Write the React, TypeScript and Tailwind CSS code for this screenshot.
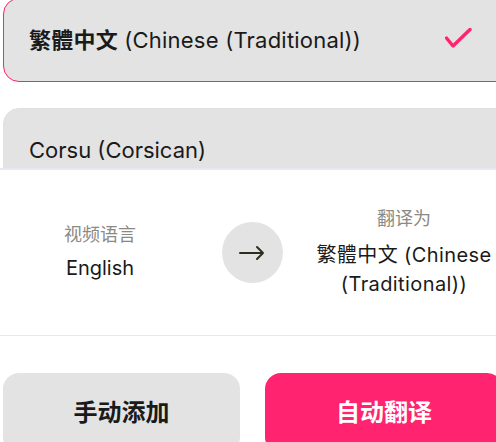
const font = "font-['Inter','Noto_Sans_CJK_SC',sans-serif]";

function Check() {
  return (
    <svg width="28" height="22" viewBox="0 0 28 22" fill="none" className="mb-[4px] shrink-0">
      <path d="M1.5 11L8 19L25 2.5" stroke="#ff2470" strokeWidth="3.4" strokeLinecap="round" strokeLinejoin="round" />
    </svg>
  );
}

function Arrow() {
  return (
    <svg width="26" height="16" viewBox="0 0 26 16" fill="none">
      <path d="M1 8H24M18 2L24 8L18 14" stroke="#2e2e1e" strokeWidth="2" strokeLinecap="round" strokeLinejoin="round" />
    </svg>
  );
}

export default function App() {
  return (
    <div className={`${font} flex h-[442px] w-[496px] flex-col overflow-hidden bg-white text-[#1a1a1a]`}>
      <div className="h-[168px] shrink-0 overflow-hidden">
        <div className="-mt-[2px] flex flex-col gap-[26px] pl-[3px]">
          <div className="flex h-[84px] w-[510px] items-center justify-between rounded-[16px] border border-[#ff2470] bg-[#e3e3e3] pl-[25px] pr-[39px]">
            <p className="text-[22px] leading-none tracking-[0.01em]">
              <span className="font-bold">繁體中文</span> (Chinese (Traditional))
            </p>
            <Check />
          </div>
          <div className="flex h-[84px] w-[510px] items-center rounded-[16px] border border-[#e0e0e0] bg-[#e3e3e3] pl-[25px]">
            <p className="text-[22px] leading-none">Corsu (Corsican)</p>
          </div>
        </div>
      </div>
      <div className="flex flex-1 flex-col border-t-2 border-[#e8e8f0] bg-white">
        <div className="flex h-[166px] items-center border-b border-[#e8e8f0] pl-[24px]">
          <div className="flex w-[152px] flex-col items-center">
            <p className="text-[18px] leading-[24px] text-[#8a8a84]">视频语言</p>
            <p className="mt-[6px] text-[20px] leading-[30px]">English</p>
          </div>
          <div className="flex w-[152px] justify-center">
            <div className="flex h-[61px] w-[61px] items-center justify-center rounded-full bg-[#e3e3e3]">
              <Arrow />
            </div>
          </div>
          <div className="flex w-[152px] justify-center">
            <div className="flex w-[200px] shrink-0 flex-col items-center text-center">
              <p className="text-[18px] leading-[24px] text-[#8a8a84]">翻译为</p>
              <p className="mt-[10px] text-[20px] leading-[29px] tracking-[0.02em]">
                繁體中文 (Chinese
                <br />
                (Traditional))
              </p>
            </div>
          </div>
        </div>
        <div className="mt-[37px] flex gap-[25px] pl-[3px]">
          <button className="flex h-[80px] w-[237px] shrink-0 items-center justify-center rounded-[16px] bg-[#e3e3e3] text-[24px] font-bold text-[#1a1a1a]">
            手动添加
          </button>
          <button className="flex h-[80px] w-[238px] shrink-0 items-center justify-center rounded-[16px] bg-[#ff2370] text-[24px] font-bold text-white">
            自动翻译
          </button>
        </div>
      </div>
    </div>
  );
}
